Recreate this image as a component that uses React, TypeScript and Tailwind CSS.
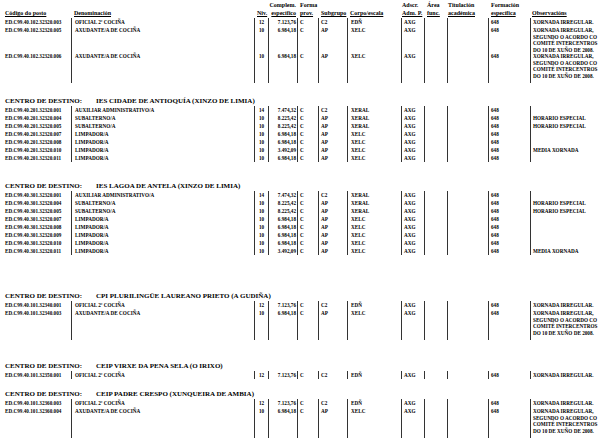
import React from "react";

type Post = {
  code: string;
  name: string;
  niv: string;
  comp: string;
  sub: string;
  corpo: string;
  obs?: string[];
};

const cols =
  "grid grid-cols-[71px_183px_14px_29px_21px_29px_54px_23px_23px_41px_42px_1fr]";

const ACORDO = [
  "XORNADA IRREGULAR,",
  "SEGUNDO O ACORDO CO",
  "COMITÉ INTERCENTROS",
  "DO 10 DE XUÑO DE 2008.",
];

const oficial = (code: string): Post => ({
  code,
  name: "OFICIAL 2ª COCIÑA",
  niv: "12",
  comp: "7.123,76",
  sub: "C2",
  corpo: "EDÑ",
  obs: ["XORNADA IRREGULAR."],
});

const axudante = (code: string): Post => ({
  code,
  name: "AXUDANTE/A DE COCIÑA",
  niv: "10",
  comp: "6.984,18",
  sub: "AP",
  corpo: "XELC",
  obs: ACORDO,
});

const aux = (code: string): Post => ({
  code,
  name: "AUXILIAR ADMINISTRATIVO/A",
  niv: "14",
  comp: "7.474,32",
  sub: "C2",
  corpo: "XERAL",
});

const subalterno = (code: string): Post => ({
  code,
  name: "SUBALTERNO/A",
  niv: "10",
  comp: "8.225,42",
  sub: "AP",
  corpo: "XERAL",
  obs: ["HORARIO ESPECIAL"],
});

const limpador = (code: string, media?: boolean): Post => ({
  code,
  name: "LIMPADOR/A",
  niv: "10",
  comp: media ? "3.492,09" : "6.984,18",
  sub: "AP",
  corpo: "XELC",
  obs: media ? ["MEDIA XORNADA"] : undefined,
});

const sections: { title?: string; mt: string; rows: Post[] }[] = [
  {
    mt: "mt-[1px]",
    rows: [
      oficial("ED.C99.40.102.32320.003"),
      axudante("ED.C99.40.102.32320.005"),
      axudante("ED.C99.40.102.32320.006"),
    ],
  },
  {
    title: "IES CIDADE DE ANTIOQUÍA (XINZO DE LIMIA)",
    mt: "mt-[13px]",
    rows: [
      aux("ED.C99.40.201.32320.001"),
      subalterno("ED.C99.40.201.32320.004"),
      subalterno("ED.C99.40.201.32320.005"),
      limpador("ED.C99.40.201.32320.007"),
      limpador("ED.C99.40.201.32320.008"),
      limpador("ED.C99.40.201.32320.010", true),
      limpador("ED.C99.40.201.32320.011"),
    ],
  },
  {
    title: "IES LAGOA DE ANTELA (XINZO DE LIMIA)",
    mt: "mt-[19px]",
    rows: [
      aux("ED.C99.40.301.32320.001"),
      subalterno("ED.C99.40.301.32320.004"),
      subalterno("ED.C99.40.301.32320.005"),
      limpador("ED.C99.40.301.32320.007"),
      limpador("ED.C99.40.301.32320.008"),
      limpador("ED.C99.40.301.32320.009"),
      limpador("ED.C99.40.301.32320.010"),
      limpador("ED.C99.40.301.32320.011", true),
    ],
  },
  {
    title: "CPI PLURILINGÜE LAUREANO PRIETO (A GUDIÑA)",
    mt: "mt-[36px]",
    rows: [
      oficial("ED.C99.40.101.32340.001"),
      axudante("ED.C99.40.101.32340.003"),
    ],
  },
  {
    title: "CEIP VIRXE DA PENA SELA (O IRIXO)",
    mt: "mt-[21px]",
    rows: [oficial("ED.C99.40.101.32350.001")],
  },
  {
    title: "CEIP PADRE CRESPO (XUNQUEIRA DE AMBIA)",
    mt: "mt-[10px]",
    rows: [
      oficial("ED.C99.40.101.32360.003"),
      axudante("ED.C99.40.101.32360.004"),
    ],
  },
];

const cell = "border-l border-[#333] whitespace-nowrap";

function Row({ r, last }: { r: Post; last: boolean }) {
  const tall = (r.obs?.length ?? 0) > 1;
  const h = tall ? (last ? "h-[31px]" : "h-[26px]") : "h-[8px]";
  return (
    <div className={`${cols} ${h} text-[5.2px] leading-[8px] font-bold text-black`}>
      <div className="pl-[5px] whitespace-nowrap">{r.code}</div>
      <div className={`${cell} pl-[3px]`}>{r.name}</div>
      <div className={`${cell} text-center`}>{r.niv}</div>
      <div className={`${cell} text-right pr-[1px]`}>{r.comp}</div>
      <div className={`${cell} pl-[2px]`}>C</div>
      <div className={`${cell} pl-[2px]`}>{r.sub}</div>
      <div className={`${cell} pl-[3px]`}>{r.corpo}</div>
      <div className={`${cell} pl-[2px]`}>AXG</div>
      <div className={cell}></div>
      <div className={cell}></div>
      <div className={`${cell} pl-[2px]`}>648</div>
      <div className={`${cell} pl-[2px]`}>
        {tall ? (
          <div className="pt-[1px] leading-[6.5px]">
            {r.obs!.map((l) => (
              <div key={l}>{l}</div>
            ))}
          </div>
        ) : (
          r.obs?.[0]
        )}
      </div>
    </div>
  );
}

function Head({ top, bottom, className }: { top?: string; bottom: string; className?: string }) {
  return (
    <div className={`flex flex-col justify-end whitespace-nowrap ${className ?? ""}`}>
      {top && <span>{top}</span>}
      <span className="underline underline-offset-[1px]">{bottom}</span>
    </div>
  );
}

export default function App() {
  return (
    <div className="w-[615px] h-[439px] bg-white overflow-hidden font-['Liberation_Serif','Times_New_Roman',serif] text-black">
      <div className={`${cols} h-[17px] pt-[1px] text-[6px] leading-[8px] font-bold`}>
        <Head bottom="Código do posto" className="pl-[5px]" />
        <Head bottom="Denominación" className="pl-[3px]" />
        <Head bottom="Niv." className="pl-[3px]" />
        <Head top="Complem." bottom="específico" className="items-end pr-[1px]" />
        <Head top="Forma" bottom="prov." className="pl-[3px]" />
        <Head bottom="Subgrupo" className="pl-[3px]" />
        <Head bottom="Corpo/escala" className="pl-[3px]" />
        <Head top="Adscr." bottom="Adm. P." className="pl-[1px]" />
        <Head top="Área" bottom="func." className="pl-[3px]" />
        <Head top="Titulación" bottom="académica" className="pl-[1px]" />
        <Head top="Formación" bottom="específica" className="pl-[3px]" />
        <Head bottom="Observacións" className="pl-[2px]" />
      </div>

      {sections.map((s, i) => (
        <div key={i} className={s.mt}>
          {s.title && (
            <div className="flex h-[10px] items-center pl-[5px] text-[7px] leading-[10px] font-bold">
              <span>CENTRO DE DESTINO:</span>
              <span className="ml-[14px]">{s.title}</span>
            </div>
          )}
          {s.rows.map((r, j) => (
            <Row key={r.code} r={r} last={j === s.rows.length - 1} />
          ))}
        </div>
      ))}
    </div>
  );
}
